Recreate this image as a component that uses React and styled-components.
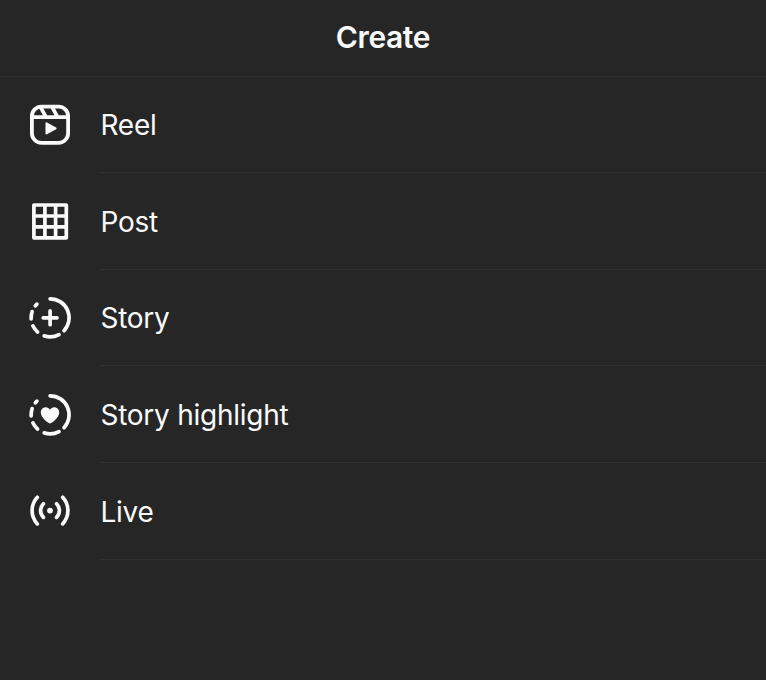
import React from 'react';
import styled, { createGlobalStyle } from 'styled-components';

const GlobalStyle = createGlobalStyle`
  body {
    margin: 0;
    background: #262626;
  }
`;

const Sheet = styled.main`
  display: flex;
  flex-direction: column;
  height: 680px;
  box-sizing: border-box;
  overflow: hidden;
  background: #262626;
  color: #fafafa;
  font-family: Inter, 'Liberation Sans', sans-serif;
`;

const Header = styled.header`
  display: flex;
  flex: none;
  align-items: center;
  justify-content: center;
  height: 77px;
  box-sizing: border-box;
  padding-bottom: 3px;
  border-bottom: 1px solid #323232;
`;

const Title = styled.h1`
  margin: 0;
  font-size: 30px;
  line-height: 36px;
  font-weight: 600;
  letter-spacing: -0.4px;
`;

const Menu = styled.ul`
  margin: 0;
  padding: 0;
  list-style: none;
`;

const Item = styled.li`
  display: flex;
  align-items: stretch;
  height: 96.6px;
  padding-left: 20px;
  gap: 20px;

  &:first-child {
    height: 96.3px;
  }
`;

const Icon = styled.svg`
  flex: none;
  align-self: center;
  width: 60px;
  height: 60px;
  fill: none;
  stroke: #fafafa;
  stroke-width: ${(p) => p.$weight || 3.7};
  stroke-linecap: round;
  stroke-linejoin: round;
`;

const Label = styled.span`
  display: flex;
  flex: 1;
  align-items: center;
  box-sizing: border-box;
  padding-top: 1.4px;
  padding-left: 0.5px;
  border-bottom: 1px solid #323232;
  font-size: 28px;
  line-height: 34px;
  letter-spacing: -0.26px;
`;

const RING_RADIUS = 19;
const RING_SEGMENTS = [
  [-90, 43],
  [62, 108],
  [131, 155],
  [177, 199],
  [219, 226],
];

const point = (deg) => {
  const a = (deg * Math.PI) / 180;
  return `${(30.1 + RING_RADIUS * Math.cos(a)).toFixed(2)} ${(29.8 + RING_RADIUS * Math.sin(a)).toFixed(2)}`;
};

const ringPath = RING_SEGMENTS.map(
  ([from, to]) => `M${point(from)}A${RING_RADIUS} ${RING_RADIUS} 0 0 1 ${point(to)}`
).join('');

const ReelIcon = () => (
  <Icon viewBox="0 0 60 60" $weight={3.8}>
    <rect x="11.9" y="11.6" width="36.2" height="36.2" rx="9.5" />
    <path d="M12 22.1H48M20.4 11.8L26 22M32 11.8L37.6 22" strokeWidth="3.7" strokeLinecap="butt" />
    <path d="M26.5 28.3V38.5L35.6 33.4Z" fill="#fafafa" strokeWidth="2" />
  </Icon>
);

const PostIcon = () => (
  <Icon viewBox="0 0 60 60" $weight={3.7}>
    <path d="M13.9 13H46.3V45.8H13.9ZM24.9 13V46M35.6 13V46M14 24H46M14 34.8H46" />
  </Icon>
);

const StoryIcon = () => (
  <Icon viewBox="0 0 60 60">
    <path d={ringPath} />
    <path d="M23.2 29.8H37M30.1 22.9V36.7" />
  </Icon>
);

const HighlightIcon = () => (
  <Icon viewBox="0 0 60 60">
    <path d={ringPath} />
    <path
      d="M30 38.5C28.6 38.5 20.8 32.7 20.8 27.5C20.8 24.5 23 22.3 25.8 22.3C27.6 22.3 29 23.2 30 24.8C31 23.2 32.4 22.3 34.2 22.3C37 22.3 39.2 24.5 39.2 27.5C39.2 32.7 31.4 38.5 30 38.5Z"
      fill="#fafafa"
      stroke="none"
    />
  </Icon>
);

const LiveIcon = () => (
  <Icon viewBox="0 0 60 60">
    <circle cx="30" cy="29.6" r="2.9" fill="#fafafa" stroke="none" />
    <path d="M23.4 22.8A9.7 9.7 0 0 0 23.4 36.4M36.6 22.8A9.7 9.7 0 0 1 36.6 36.4" />
    <path d="M17.3 16.3A19.6 19.6 0 0 0 17.3 42.9M42.7 16.3A19.6 19.6 0 0 1 42.7 42.9" />
  </Icon>
);

const items = [
  { label: 'Reel', icon: ReelIcon },
  { label: 'Post', icon: PostIcon },
  { label: 'Story', icon: StoryIcon },
  { label: 'Story highlight', icon: HighlightIcon },
  { label: 'Live', icon: LiveIcon },
];

export default function App() {
  return (
    <>
      <GlobalStyle />
      <Sheet>
        <Header>
          <Title>Create</Title>
        </Header>
        <Menu>
          {items.map(({ label, icon: Glyph }) => (
            <Item key={label}>
              <Glyph />
              <Label>{label}</Label>
            </Item>
          ))}
        </Menu>
      </Sheet>
    </>
  );
}
